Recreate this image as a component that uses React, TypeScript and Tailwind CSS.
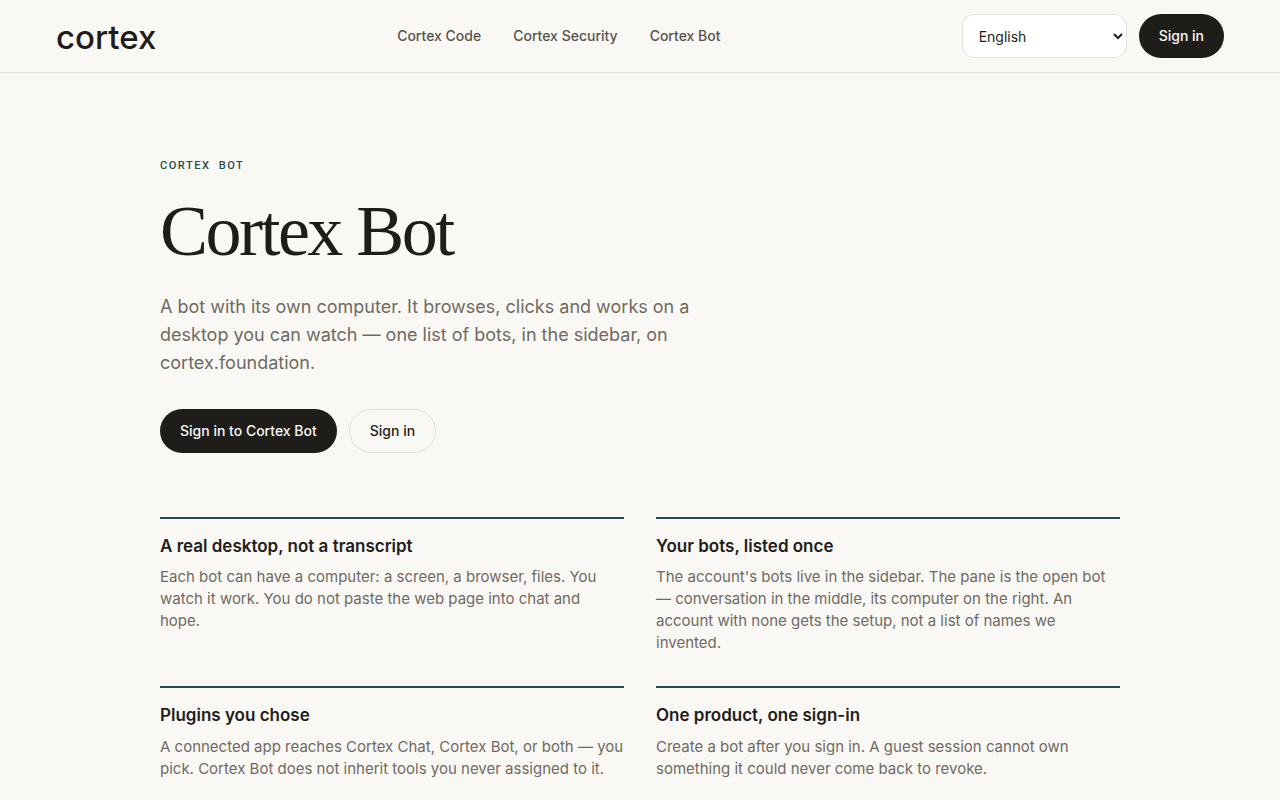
const features = [
    {
        title: "A real desktop, not a transcript",
        body: "Each bot can have a computer: a screen, a browser, files. You watch it work. You do not paste the web page into chat and hope.",
    },
    {
        title: "Your bots, listed once",
        body: "The account's bots live in the sidebar. The pane is the open bot — conversation in the middle, its computer on the right. An account with none gets the setup, not a list of names we invented.",
    },
    {
        title: "Plugins you chose",
        body: "A connected app reaches Cortex Chat, Cortex Bot, or both — you pick. Cortex Bot does not inherit tools you never assigned to it.",
    },
    {
        title: "One product, one sign-in",
        body: "Create a bot after you sign in. A guest session cannot own something it could never come back to revoke.",
    },
];

const App = () => {
    return (
        <div className="min-h-screen bg-[#faf8f5] font-['Inter',sans-serif] text-[#1f1d1a]">
            <header className="flex h-[73px] items-center justify-between border-b border-[#e6e2dc] px-14">
                <a className="w-[100px] pt-[2px] text-[33px] leading-none font-[550] whitespace-nowrap">
                    cortex
                </a>
                <nav className="flex gap-8 text-sm font-medium text-[#57534c]">
                    <a>Cortex Code</a>
                    <a>Cortex Security</a>
                    <a>Cortex Bot</a>
                </nav>
                <div className="flex items-center gap-3">
                    <select className="h-[44px] w-[165px] rounded-xl border border-[#e6e2dc] bg-white pl-3 text-sm text-[#1f1d1a]">
                        <option>English</option>
                    </select>
                    <button className="h-[44px] rounded-full bg-[#1f1d1a] px-5 text-sm font-medium whitespace-nowrap text-[#faf8f5]">
                        Sign in
                    </button>
                </div>
            </header>
            <main className="mx-auto w-[960px] pt-[86px]">
                <p className="font-['Roboto',sans-serif] text-[11px] leading-[14px] font-medium tracking-[0.14em] [word-spacing:4px] text-[#234e4a]">
                    CORTEX BOT
                </p>
                <h1 className="mt-[18px] font-['Liberation_Serif',serif] text-[72px] leading-[80px] font-normal tracking-[-0.035em]">
                    Cortex Bot
                </h1>
                <p className="mt-[22px] w-[560px] text-lg leading-7 text-[#6f6a62]">
                    A bot with its own computer. It browses, clicks and works on a desktop you can
                    watch — one list of bots, in the sidebar, on cortex.foundation.
                </p>
                <div className="mt-8 flex gap-3">
                    <button className="h-[44px] rounded-full bg-[#1f1d1a] px-5 text-sm font-medium text-[#faf8f5]">
                        Sign in to Cortex Bot
                    </button>
                    <button className="h-[44px] rounded-full border border-[#e6e2dc] px-5 text-sm font-medium">
                        Sign in
                    </button>
                </div>
                <section className="mt-16 grid grid-cols-2 gap-x-8 gap-y-[32.1px]">
                    {features.map((feature) => (
                        <div key={feature.title} className="border-t-2 border-[#234e4a] pt-4">
                            <h3 className="text-[17px] leading-[23.3px] font-semibold">{feature.title}</h3>
                            <p className="mt-2 text-[15px] leading-[22px] text-[#6f6a62]">
                                {feature.body}
                            </p>
                        </div>
                    ))}
                </section>
            </main>
        </div>
    );
};

export default App;
